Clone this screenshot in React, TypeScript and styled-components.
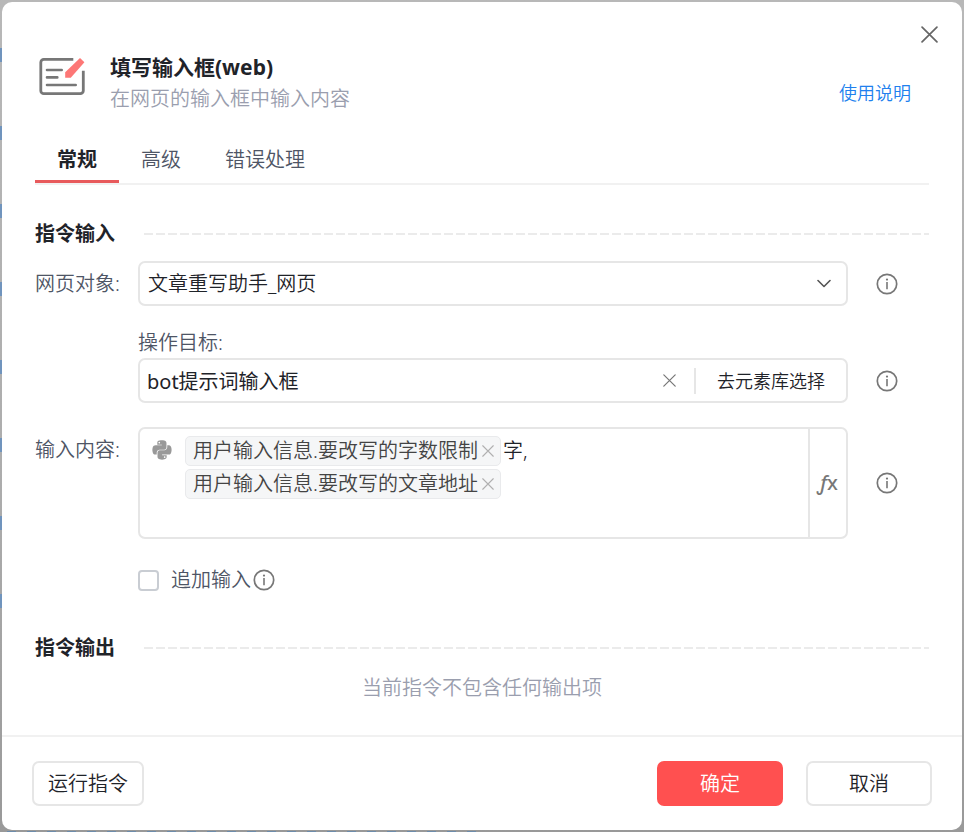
import React, { useState } from "react";
import styled, { createGlobalStyle } from "styled-components";
import { FaPython } from "react-icons/fa";

const color = {
  text: "#1f2329",
  label: "#4e5565",
  muted: "#9a9eae",
  border: "#e6e6e6",
  line: "#f1f1f1",
  icon: "#777777",
  red: "#ff5050",
  blue: "#2080ee",
};

const GlobalStyle = createGlobalStyle`
  * { box-sizing: border-box; }
  body { margin: 0; }
  body, button, input, select {
    font-family: "Noto Sans", "Noto Sans CJK SC", sans-serif;
    font-size: 20px;
    font-weight: 350;
    line-height: 28px;
    color: ${color.text};
  }
  button { cursor: pointer; }
`;

const Backdrop = styled.div`
  min-height: 100vh;
  padding: 2px;
  display: flex;
  background:
    repeating-linear-gradient(transparent 0 48px, #7094bd 48px 62px, transparent 62px 78px) 0 0 / 2px 620px no-repeat,
    repeating-linear-gradient(90deg, transparent 0 7px, #6d8cab 7px 16px, transparent 16px 20px) 0 100% / 478px 1px no-repeat,
    linear-gradient(#b8b8b8, #acacac 60%, #999999);
`;

const Dialog = styled.main`
  flex: 1;
  display: flex;
  flex-direction: column;
  background: #ffffff;
  border-radius: 10px;
`;

const TitleBar = styled.div`
  display: flex;
  justify-content: flex-end;
  padding: 24px 24px 0;
`;

const IconButton = styled.button`
  display: flex;
  flex: none;
  padding: 0;
  border: 0;
  background: none;
  color: ${color.icon};
`;

const Header = styled.header`
  display: flex;
  margin-top: 8px;
  padding: 0 33px;
`;

const HeaderIcon = styled.div`
  display: flex;
  padding: 6px 24px 0 3px;
`;

const Headings = styled.div`
  flex: 1;
`;

const Title = styled.h1`
  margin: 0;
  font-size: 21px;
  line-height: 32px;
  font-weight: 700;
`;

const Subtitle = styled.p`
  margin: 0;
  line-height: 32px;
  color: ${color.muted};
`;

const HelpLink = styled.a`
  align-self: center;
  padding: 20px 18px 0 0;
  font-size: 18px;
  color: ${color.blue};
  text-decoration: none;
`;

const Tabs = styled.div`
  display: flex;
  margin: 25px 33px 0;
  border-bottom: 2px solid ${color.line};
`;

const Tab = styled.button<{ $active: boolean }>`
  height: 43px;
  padding: 0 22px;
  border: 0;
  border-bottom: 3px solid ${(p) => (p.$active ? "#e85a5c" : "transparent")};
  background: none;
  font-weight: ${(p) => (p.$active ? 700 : 350)};
  color: ${(p) => (p.$active ? color.text : color.label)};
`;

const Body = styled.div`
  flex: 1;
  padding: 35px 33px 0;
`;

const SectionTitle = styled.div`
  display: grid;
  grid-template-columns: 109px 1fr;
  align-items: center;
  h2 {
    margin: 0;
    font-size: 20px;
    line-height: 28px;
    font-weight: 700;
  }
  &::after {
    content: "";
    height: 2px;
    background: repeating-linear-gradient(90deg, #ebebeb 0 9px, transparent 9px 12px);
  }
`;

const Row = styled.div<{ $gap: number }>`
  display: grid;
  grid-template-columns: 103px 1fr 78px;
  align-items: center;
  margin-top: ${(p) => p.$gap}px;
  padding-right: 3px;
`;

const Label = styled.label`
  color: ${color.label};
`;

const TopLabel = styled(Label)`
  align-self: start;
  padding-top: 9px;
`;

const UpperLabel = styled(Label)`
  grid-column: 2 / 4;
  line-height: 30px;
`;

const Help = styled(IconButton)`
  justify-self: center;
  grid-column: 3;
`;

const Box = styled.div`
  grid-column: 2;
  display: flex;
  align-items: center;
  min-width: 0;
  min-height: 45px;
  border: 2px solid ${color.border};
  border-radius: 7px;
`;

const Select = styled.select`
  flex: 1;
  width: 100%;
  height: 41px;
  padding: 0 8px;
  border: 0;
  background: none;
  appearance: none;
`;

const SelectBox = styled(Box)`
  display: grid;
  grid-template-columns: 1fr 38px;
  select { grid-area: 1 / 1 / 2 / 3; }
  svg { grid-area: 1 / 2; pointer-events: none; margin-left: 9px; }
`;

const TextInput = styled.input`
  flex: 1;
  min-width: 0;
  height: 41px;
  padding: 0 7px;
  border: 0;
  background: none;
  outline: none;
  font-weight: 400;
`;

const PickButton = styled.button`
  margin-left: 18px;
  padding: 0 21px;
  border: 0;
  border-left: 2px solid ${color.border};
  background: none;
  font-size: 18px;
  line-height: 26px;
`;

const ContentBox = styled(Box)`
  align-items: stretch;
  min-height: 112px;
`;

const PythonMark = styled.div`
  padding: 10px 12px 0 11px;
  color: #999999;
`;

const Editor = styled.div`
  flex: 1;
  display: flex;
  flex-direction: column;
  gap: 3px;
  padding-top: 7px;
  outline: none;
`;

const EditorLine = styled.div`
  display: flex;
  align-items: center;
  gap: 2px;
`;

const Chip = styled.span`
  display: flex;
  align-items: center;
  gap: 4px;
  height: 30px;
  padding: 0 6px 0 7px;
  border: 1px solid #e9eaec;
  border-radius: 5px;
  background: #f5f6f7;
  color: #444444;
`;

const FxButton = styled.button`
  width: 38px;
  padding: 0;
  border: 0;
  border-left: 2px solid ${color.border};
  background: none;
  font-weight: 500;
  color: ${color.icon};
`;

const CheckRow = styled.div`
  display: flex;
  align-items: center;
  gap: 2px;
  margin: 27px 0 0 103px;
`;

const Checkbox = styled.input`
  appearance: none;
  width: 21px;
  height: 21px;
  margin: 0 10px 0 0;
  border: 2px solid #c9cdd3;
  border-radius: 4px;
  &:checked { background: ${color.red}; }
`;

const OutputTitle = styled(SectionTitle)`
  margin-top: 40px;
`;

const Empty = styled.p`
  margin: 12px 0 0;
  text-align: center;
  color: ${color.muted};
`;

const Footer = styled.footer`
  display: flex;
  gap: 23px;
  padding: 24px 30px;
  border-top: 2px solid ${color.line};
`;

const Button = styled.button<{ $primary?: boolean }>`
  min-width: 126px;
  height: 45px;
  padding: 0;
  border: 2px solid ${(p) => (p.$primary ? color.red : color.border)};
  border-radius: 7px;
  background: ${(p) => (p.$primary ? color.red : "#ffffff")};
  color: ${(p) => (p.$primary ? "#ffffff" : color.text)};
`;

const RunButton = styled(Button)`
  min-width: 112px;
  margin-right: auto;
`;

const Cross = ({ size, stroke, width }: { size: number; stroke: string; width: number }) => (
  <svg width={size} height={size} viewBox="0 0 16 16" stroke={stroke} strokeWidth={width} strokeLinecap="round">
    <path d="M1 1 15 15M15 1 1 15" />
  </svg>
);

const InfoIcon = () => (
  <svg width="22" height="22" viewBox="0 0 22 22" fill="none" stroke="currentColor">
    <circle cx="11" cy="11" r="9.7" strokeWidth="1.7" />
    <path d="M11 9v7.2" strokeWidth="1.6" />
    <circle cx="11" cy="6.6" r="1.1" fill="currentColor" stroke="none" />
  </svg>
);

const FormIcon = () => (
  <svg width="48" height="40" viewBox="0 0 48 40" fill="none">
    <path
      d="M35.3 2.4H5.800a3 3 0 0 0-3 3V33.700a3 3 0 0 0 3 3H42.300a3 3 0 0 0 3-3V13.700"
      stroke="#777777"
      strokeWidth="2.8"
    />
    <path d="M9 13H23.700M9 20.400H19.300M9 28H37.700" stroke="#777777" strokeWidth="2.6" strokeLinecap="round" />
    <path d="M27.200 20.800V15.200L42 1 46.400 5.200 32.800 20.800Z" fill="#fd7776" />
  </svg>
);

const InfoButton = () => (
  <Help type="button" aria-label="说明">
    <InfoIcon />
  </Help>
);

const fields = ["用户输入信息.要改写的字数限制", "用户输入信息.要改写的文章地址"];
const tabs = ["常规", "高级", "错误处理"];

export default function App() {
  const [tab, setTab] = useState(tabs[0]);
  const [target, setTarget] = useState("bot提示词输入框");
  const [append, setAppend] = useState(false);

  return (
    <Backdrop>
      <GlobalStyle />
      <Dialog>
        <TitleBar>
          <IconButton type="button" aria-label="关闭">
            <Cross size={17} stroke="#666666" width={1.6} />
          </IconButton>
        </TitleBar>
        <Header>
          <HeaderIcon>
            <FormIcon />
          </HeaderIcon>
          <Headings>
            <Title>填写输入框(web)</Title>
            <Subtitle>在网页的输入框中输入内容</Subtitle>
          </Headings>
          <HelpLink href="#help">使用说明</HelpLink>
        </Header>
        <Tabs role="tablist">
          {tabs.map((name) => (
            <Tab key={name} type="button" role="tab" aria-selected={tab === name} $active={tab === name} onClick={() => setTab(name)}>
              {name}
            </Tab>
          ))}
        </Tabs>
        <Body>
          <SectionTitle>
            <h2>指令输入</h2>
          </SectionTitle>
          <Row $gap={13}>
            <Label htmlFor="page">网页对象:</Label>
            <SelectBox>
              <Select id="page">
                <option>文章重写助手_网页</option>
              </Select>
              <svg width="14" height="9" viewBox="0 0 14 9" fill="none" stroke="#555555" strokeWidth="1.6" strokeLinecap="round" strokeLinejoin="round">
                <path d="M1 1.500 7 7.500 13 1.500" />
              </svg>
            </SelectBox>
            <InfoButton />
          </Row>
          <Row $gap={22}>
            <UpperLabel htmlFor="target">操作目标:</UpperLabel>
            <Box>
              <TextInput id="target" value={target} onChange={(e) => setTarget(e.target.value)} />
              <IconButton type="button" aria-label="清除" onClick={() => setTarget("")}>
                <Cross size={13} stroke="#777777" width={1.5} />
              </IconButton>
              <PickButton type="button">去元素库选择</PickButton>
            </Box>
            <InfoButton />
          </Row>
          <Row $gap={24}>
            <TopLabel as="span" id="content-label">输入内容:</TopLabel>
            <ContentBox>
              <PythonMark>
                <FaPython size={22} />
              </PythonMark>
              <Editor role="textbox" aria-multiline="true" aria-labelledby="content-label" tabIndex={0}>
                {fields.map((name, i) => (
                  <EditorLine key={name}>
                    <Chip>
                      {name}
                      <IconButton type="button" aria-label="移除">
                        <Cross size={12} stroke="#b0b0b0" width={1.5} />
                      </IconButton>
                    </Chip>
                    {i === 0 && <span>字,</span>}
                  </EditorLine>
                ))}
              </Editor>
              <FxButton type="button">
                <em>ƒ</em>x
              </FxButton>
            </ContentBox>
            <InfoButton />
          </Row>
          <CheckRow>
            <Checkbox id="append" type="checkbox" checked={append} onChange={(e) => setAppend(e.target.checked)} />
            <Label htmlFor="append">追加输入</Label>
            <InfoButton />
          </CheckRow>
          <OutputTitle>
            <h2>指令输出</h2>
          </OutputTitle>
          <Empty>当前指令不包含任何输出项</Empty>
        </Body>
        <Footer>
          <RunButton type="button">运行指令</RunButton>
          <Button type="button" $primary>确定</Button>
          <Button type="button">取消</Button>
        </Footer>
      </Dialog>
    </Backdrop>
  );
}
